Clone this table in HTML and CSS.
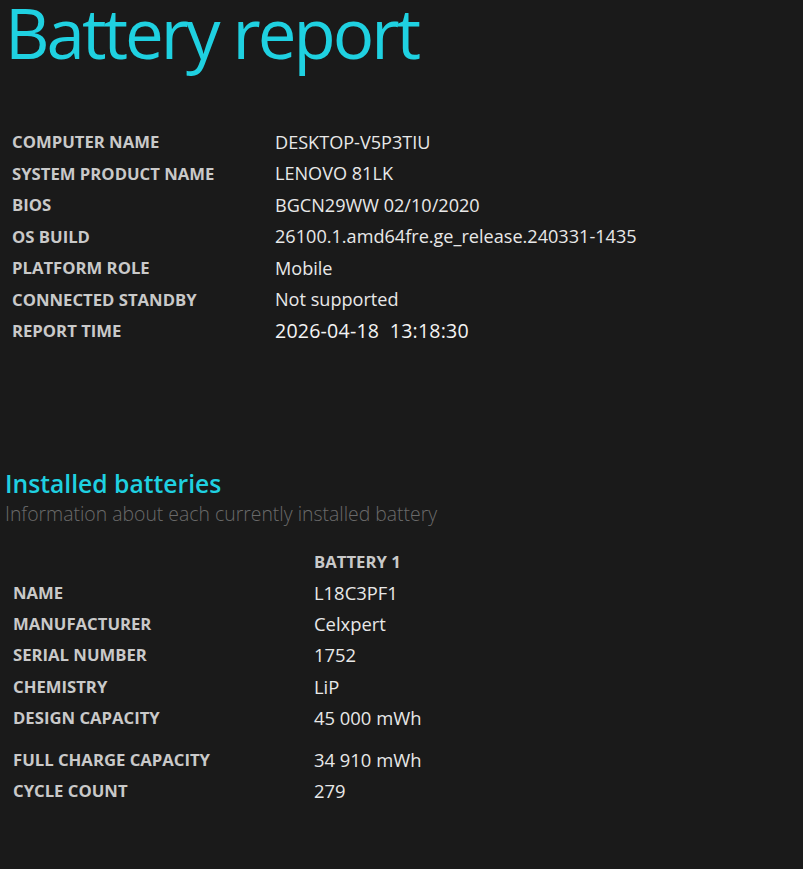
FILE: index.html
```html
<!DOCTYPE html>
<html>
<head>
<meta charset="utf-8">
<link rel="stylesheet" href="styles.css">
</head>
<body>
<h1 class="title">Battery report</h1>
<table class="info">
  <tr><td class="label">COMPUTER NAME</td><td class="value">DESKTOP-V5P3TIU</td></tr>
  <tr><td class="label">SYSTEM PRODUCT NAME</td><td class="value">LENOVO 81LK</td></tr>
  <tr><td class="label">BIOS</td><td class="value">BGCN29WW 02/10/2020</td></tr>
  <tr><td class="label">OS BUILD</td><td class="value">26100.1.amd64fre.ge_release.240331-1435</td></tr>
  <tr><td class="label">PLATFORM ROLE</td><td class="value">Mobile</td></tr>
  <tr><td class="label">CONNECTED STANDBY</td><td class="value">Not supported</td></tr>
  <tr><td class="label">REPORT TIME</td><td class="value time">2026-04-18&nbsp;&nbsp;13:18:30</td></tr>
</table>
<h2 class="section">Installed batteries</h2>
<div class="desc">Information about each currently installed battery</div>
<table class="batt">
  <tr class="headrow"><td class="label"></td><td class="head">BATTERY 1</td></tr>
  <tr><td class="label">NAME</td><td class="value">L18C3PF1</td></tr>
  <tr><td class="label">MANUFACTURER</td><td class="value">Celxpert</td></tr>
  <tr><td class="label">SERIAL NUMBER</td><td class="value">1752</td></tr>
  <tr><td class="label">CHEMISTRY</td><td class="value">LiP</td></tr>
  <tr><td class="label">DESIGN CAPACITY</td><td class="value">45 000 mWh</td></tr>
  <tr class="spaced"><td class="label">FULL CHARGE CAPACITY</td><td class="value">34 910 mWh</td></tr>
  <tr><td class="label">CYCLE COUNT</td><td class="value">279</td></tr>
</table>
</body>
</html>
```
FILE: styles.css
```css
html, body {
  margin: 0;
  padding: 0;
  background: #1a1a1a;
  height: 100%;
}
body {
  font-family: "Open Sans", "Noto Sans", sans-serif;
  color: #e6e6e6;
}
.title {
  margin: 0;
  padding: 0 0 0 5px;
  font-size: 69px;
  font-weight: 400;
  line-height: 64px;
  color: #1fd1e1;
  letter-spacing: -3px;
}
table {
  border-collapse: collapse;
}
td {
  padding: 0;
  white-space: nowrap;
}
.info {
  margin: 62px 0 0 12px;
}
.info tr {
  height: 31.5px;
}
.info .label {
  width: 263px;
}
.label {
  font-size: 16.7px;
  font-weight: 700;
  color: #c9c9c9;
}
.value {
  font-size: 18.1px;
  color: #e8e8e8;
}
.value.time {
  font-size: 19.6px;
  font-weight: 500;
  color: #f4f4f4;
  letter-spacing: 0.2px;
}
.section {
  margin: 122px 0 0 5px;
  font-size: 24.7px;
  font-weight: 600;
  color: #1fd1e1;
  line-height: 30px;
}
.desc {
  margin: 0 0 0 5px;
  font-size: 19.4px;
  font-weight: 300;
  color: #6a6a6a;
  line-height: 30px;
}
.batt {
  margin: 18px 0 0 13px;
}
.batt tr {
  height: 31.3px;
}
.batt tr.headrow {
  height: 30px;
}
.batt .label {
  width: 301px;
}
.batt .value {
  font-size: 18.4px;
}
.batt tr.spaced {
  height: 42px;
}
.batt tr.spaced td {
  padding-top: 10.5px;
}
.head {
  font-size: 16.7px;
  font-weight: 700;
  color: #c9c9c9;
}
```
